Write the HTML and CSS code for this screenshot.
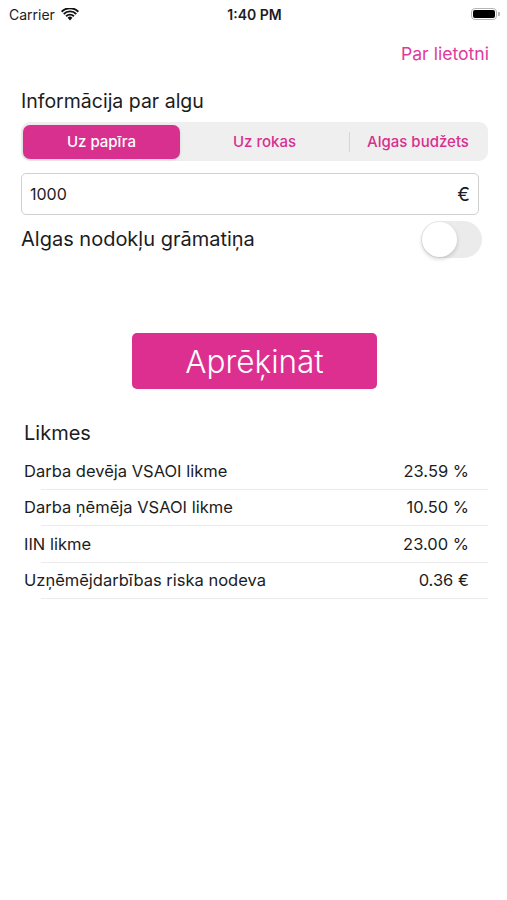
FILE: index.html
```html
<!DOCTYPE html>
<html lang="lv">
<head>
    <meta charset="UTF-8">
    <meta name="viewport" content="width=device-width, initial-scale=1.0">
    <title>Algu kalkulators</title>
    <link rel="stylesheet" href="styles.css">
</head>
<body>
    <div class="status-bar">
        <div class="status-left">
            <span>Carrier</span>
            <svg class="wifi" width="18" height="13" viewBox="0 0 18 13">
                <path d="M9 12.5 L6.6 9.8 A3.4 3.4 0 0 1 11.4 9.8 Z" fill="#111"/>
                <path d="M4.4 7.6 A6.5 6.5 0 0 1 13.6 7.6 L12.3 9 A4.6 4.6 0 0 0 5.7 9 Z" fill="#111"/>
                <path d="M2.1 5.3 A9.8 9.8 0 0 1 15.9 5.3 L14.6 6.7 A7.9 7.9 0 0 0 3.4 6.7 Z" fill="#111"/>
                <path d="M0 3 A12.8 12.8 0 0 1 18 3 L16.7 4.4 A11 11 0 0 0 1.3 4.4 Z" fill="#111"/>
            </svg>
        </div>
        <div class="status-time">1:40 PM</div>
        <div class="status-right">
            <div class="battery"><div class="battery-fill"></div></div>
            <div class="battery-tip"></div>
        </div>
    </div>

    <div class="nav">
        <a class="nav-link">Par lietotni</a>
    </div>

    <div class="content">
        <div class="section-title">Informācija par algu</div>

        <div class="segmented">
            <div class="segment active">Uz papīra</div>
            <div class="segment second">Uz rokas</div>
            <div class="divider"></div>
            <div class="segment">Algas budžets</div>
        </div>

        <div class="amount-field">
            <span>1000</span>
            <span class="currency">€</span>
        </div>

        <div class="switch-row">
            <span>Algas nodokļu grāmatiņa</span>
            <div class="switch"><div class="knob"></div></div>
        </div>

        <div class="calc-wrap">
            <button class="calc-button">Aprēķināt</button>
        </div>

        <div class="rates">
            <div class="rates-title">Likmes</div>
            <div class="rate-row">
                <span>Darba devēja VSAOI likme</span>
                <span>23.59 %</span>
            </div>
            <div class="rate-row">
                <span>Darba ņēmēja VSAOI likme</span>
                <span>10.50 %</span>
            </div>
            <div class="rate-row">
                <span>IIN likme</span>
                <span>23.00 %</span>
            </div>
            <div class="rate-row">
                <span>Uzņēmējdarbības riska nodeva</span>
                <span>0.36 €</span>
            </div>
        </div>
    </div>
</body>
</html>
```

FILE: styles.css
```css
body {
    margin: 0;
    font-family: Inter, "Noto Sans", sans-serif;
    color: #1c1c1e;
    background: #fff;
}

.status-bar {
    height: 28px;
    display: flex;
    align-items: center;
    justify-content: space-between;
    padding: 0 7px 0 9px;
    font-size: 14px;
}

.status-left {
    display: flex;
    align-items: center;
    gap: 6px;
    width: 120px;
}

.status-time {
    font-weight: 600;
}

.status-right {
    display: flex;
    align-items: center;
    justify-content: flex-end;
    width: 120px;
}

.battery {
    width: 26px;
    height: 12px;
    border: 1px solid #b5b5b5;
    border-radius: 4px;
    padding: 1px;
    box-sizing: border-box;
}

.battery-fill {
    width: 100%;
    height: 100%;
    background: #000;
    border-radius: 2px;
}

.battery-tip {
    width: 2px;
    height: 4px;
    background: #b5b5b5;
    border-radius: 0 1px 1px 0;
    margin-left: 1px;
}

.nav {
    height: 50px;
    display: flex;
    justify-content: flex-end;
    align-items: center;
    padding-right: 18px;
}

.nav-link {
    color: #e03a9c;
    font-size: 17.6px;
}

.content {
    padding: 0 19px 0 21px;
}

.section-title {
    font-size: 19.5px;
    margin-top: 8px;
    height: 30px;
    line-height: 30px;
}

.segmented {
    display: flex;
    align-items: center;
    background: #efefef;
    border-radius: 9px;
    height: 39px;
    padding: 0 2px;
    margin-top: 6px;
}

.segment {
    flex: 1;
    text-align: center;
    color: #d8308f;
    font-size: 15px;
    font-weight: 500;
}

.segment.active {
    flex: 0 0 157px;
    height: 34px;
    line-height: 34px;
    background: #d8308f;
    color: #fff;
    border-radius: 7px;
    box-shadow: 0 1px 3px rgba(0, 0, 0, 0.12);
}

.segment.second {
    flex: 0 0 169px;
}

.divider {
    width: 1px;
    height: 20px;
    background: #d6d6d6;
}

.amount-field {
    display: flex;
    justify-content: space-between;
    align-items: center;
    margin-top: 12px;
    margin-right: 9px;
    height: 40px;
    border: 1px solid #d0d0d0;
    border-radius: 5px;
    padding: 0 8px 0 8px;
    font-size: 16px;
}

.currency {
    font-size: 19px;
}

.switch-row {
    display: flex;
    justify-content: space-between;
    align-items: center;
    margin-top: 5px;
    margin-right: 6px;
    font-size: 20px;
    height: 38px;
}

.switch {
    width: 61px;
    height: 37px;
    background: #ebebeb;
    border-radius: 19px;
    position: relative;
}

.knob {
    position: absolute;
    top: 1px;
    left: 1px;
    width: 35px;
    height: 35px;
    background: #fff;
    border-radius: 50%;
    box-shadow: 0 2px 4px rgba(0, 0, 0, 0.18);
}

.calc-wrap {
    display: flex;
    justify-content: center;
    margin-top: 75px;
}

.calc-button {
    width: 245px;
    height: 56px;
    background: #dc2f8f;
    color: #fff;
    border: none;
    border-radius: 5px;
    font-family: Inter, "Noto Sans", sans-serif;
    font-size: 31.5px;
    font-weight: 300;
}

.rates {
    margin-top: 30px;
    padding-left: 3px;
}

.rates-title {
    font-size: 20px;
    height: 28px;
    line-height: 28px;
    margin-bottom: 6px;
}

.rate-row {
    display: flex;
    justify-content: space-between;
    align-items: center;
    height: 36.5px;
    box-sizing: border-box;
    padding: 0 19px 1px 0;
    font-size: 16.5px;
    background: linear-gradient(#ececec, #ececec) no-repeat 17px 100% / calc(100% - 17px) 1px;
}
```
